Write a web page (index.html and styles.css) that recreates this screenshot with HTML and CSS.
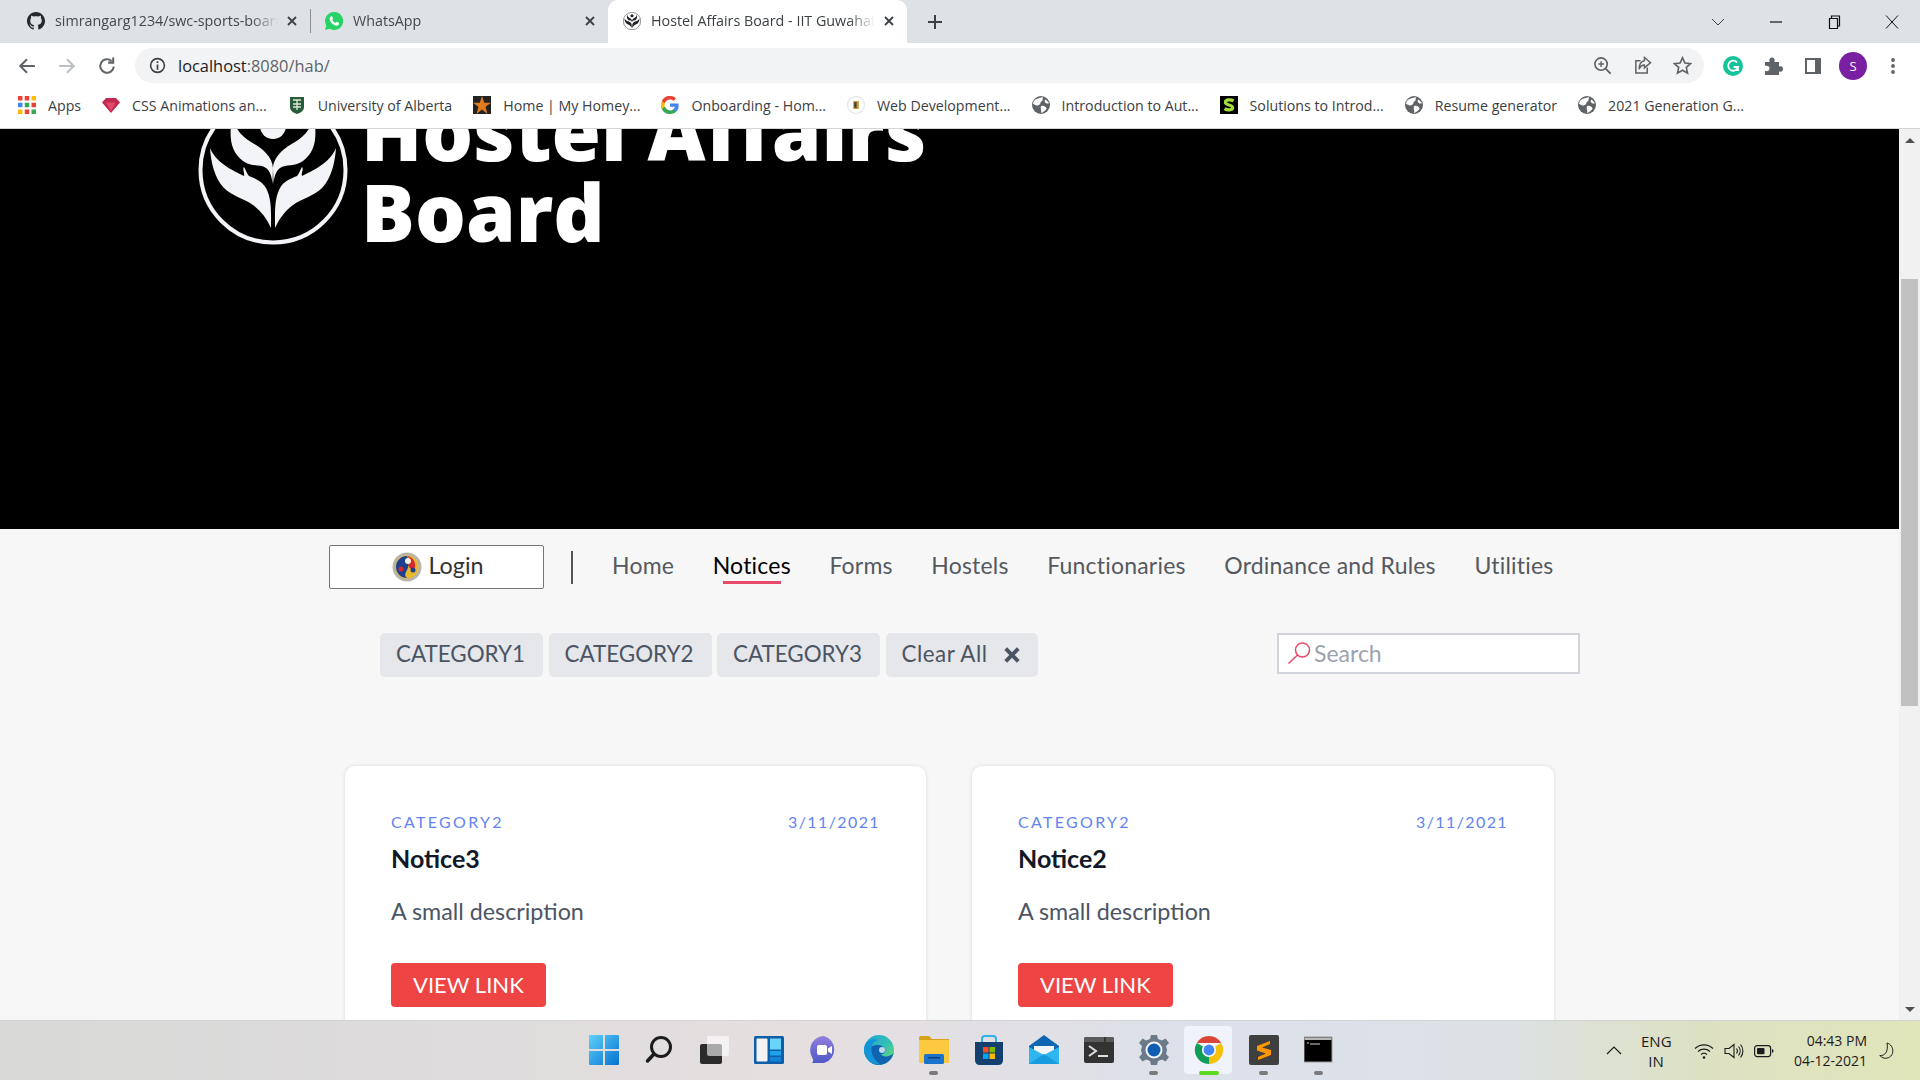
FILE: index.html
```html
<!DOCTYPE html>
<html lang="en">
<head>
    <meta charset="UTF-8">
    <meta name="viewport" content="width=device-width, initial-scale=1.0">
    <title>Hostel Affairs Board - IIT Guwahati</title>
    <link rel="stylesheet" href="styles.css">
</head>
<body>
    <!-- shared icons -->
    <svg class="defs" width="0" height="0">
        <symbol id="habLogo" viewBox="0 0 150 150">
            <circle cx="75" cy="75" r="72.5" fill="none" stroke="currentColor" stroke-width="4"/>
            <circle cx="75" cy="31" r="13" fill="currentColor"/>
            <g id="habLeaves" fill="currentColor">
                <path d="M75 73C76 60 88 52 97 47C105 42 112 36 116 22C119 42 118 56 105 66C97 72 88 69 82 73C78 76 76 82 75.5 89Z"/>
                <path d="M77 133C77 118 76 104 82 93C86 86 92 84 99 81C101 79 102 75 104 72C106 74 103 78 104 81C114 76 132 68 138 53C137 68 133 84 124 93C116 101 105 103 95 110C87 116 81 124 77 133Z"/>
            </g>
            <use href="#habLeaves" transform="matrix(-1 0 0 1 150 0)"/>
        </symbol>
        <symbol id="globe" viewBox="0 0 16 16">
            <circle cx="8" cy="8" r="8" fill="#5f6368"/>
            <path d="M3 3C5 2 8 1 10 1C9 3 10 4 8 5C7 6 8 7 6 8C5 9 3 8 1 7C1 5 2 4 3 3ZM8 9C10 8 12 9 13 11C12 13 10 14 8 15C9 13 7 11 8 9ZM12 3L15 6C15 7 13 7 12 6C11 5 11 4 12 3Z" fill="#fff"/>
        </symbol>
        <symbol id="tabClose" viewBox="0 0 12 12">
            <path d="M2 2L10 10M10 2L2 10" stroke="#3c4043" stroke-width="1.8" fill="none"/>
        </symbol>
    </svg>

    <div class="tabstrip">
        <div class="tab">
            <svg class="favicon" viewBox="0 0 16 16"><path fill="#24292e" d="M8 0C3.6 0 0 3.6 0 8c0 3.5 2.3 6.5 5.5 7.6.4.1.5-.2.5-.4v-1.4c-2.2.5-2.7-1-2.7-1-.4-.9-.9-1.200-.9-1.200-.7-.5.100-.5.100-.5.800.100 1.200.800 1.200.800.700 1.200 1.900.900 2.300.700.100-.500.300-.900.500-1.100-1.800-.200-3.600-.900-3.600-4 0-.900.300-1.600.800-2.100-.100-.200-.400-1 .100-2.100 0 0 .700-.200 2.200.800.600-.200 1.300-.300 2-.300s1.400.100 2 .300c1.500-1 2.200-.800 2.200-.800.400 1.100.200 1.900.100 2.100.500.600.800 1.300.800 2.100 0 3.100-1.900 3.700-3.700 3.900.300.300.600.800.600 1.500v2.200c0 .200.100.500.600.400C13.700 14.500 16 11.500 16 8c0-4.400-3.600-8-8-8z"/></svg>
            <span class="tab-title">simrangarg1234/swc-sports-board</span>
            <svg class="tab-close"><use href="#tabClose"/></svg>
        </div>
        <div class="tab tab-sep">
            <svg class="favicon" viewBox="0 0 16 16"><path fill="#25d366" d="M8 0a8 8 0 0 0-6.900 12L0 16l4.100-1.100A8 8 0 1 0 8 0z"/><path fill="#fff" d="M5.500 3.800c-.5 0-1.400.8-1.400 2.200 0 2.400 3.300 6.200 6.300 6.200 1.200 0 2-1 2-1.800v-.7L10.400 8.600l-1 1c-1 0-2.600-1.600-3-2.800l.8-1-.9-2z"/></svg>
            <span class="tab-title">WhatsApp</span>
            <svg class="tab-close"><use href="#tabClose"/></svg>
        </div>
        <div class="tab tab-active">
            <svg class="favicon fav-hab"><use href="#habLogo"/></svg>
            <span class="tab-title">Hostel Affairs Board - IIT Guwahati</span>
            <svg class="tab-close"><use href="#tabClose"/></svg>
        </div>
        <svg class="new-tab" viewBox="0 0 14 14"><path d="M7 0V14M0 7H14" stroke="#3c4043" stroke-width="2"/></svg>
        <div class="window-btns">
            <svg viewBox="0 0 14 14"><path d="M1 4L7 10L13 4" fill="none" stroke="#444" stroke-width="1"/></svg>
            <svg viewBox="0 0 14 14"><path d="M1 7H13" stroke="#111" stroke-width="1.200"/></svg>
            <svg viewBox="0 0 14 14"><path d="M2.500 3.500H10.500V13.500H2.500ZM4.500 3V1H12.500V11H11" fill="none" stroke="#111" stroke-width="1.200"/></svg>
            <svg viewBox="0 0 14 14"><path d="M1 0.500L13 13.500M13 0.500L1 13.500" stroke="#111" stroke-width="1"/></svg>
        </div>
    </div>

    <div class="toolbar">
        <svg class="nav-arrow" viewBox="0 0 16 16"><path d="M15 8H2M8 2L2 8L8 14" fill="none" stroke="#5f6368" stroke-width="1.800"/></svg>
        <svg class="nav-arrow" viewBox="0 0 16 16"><path d="M1 8H14M8 2L14 8L8 14" fill="none" stroke="#bcc0c4" stroke-width="1.800"/></svg>
        <svg class="nav-arrow" viewBox="0 0 16 16"><path d="M14 8.500A6 6 0 1 1 12 3.500M13.500 0.500V5H9" fill="none" stroke="#5f6368" stroke-width="1.800"/></svg>
        <div class="omnibox">
            <svg class="info-icon" viewBox="0 0 16 16"><circle cx="8" cy="8" r="6.500" fill="none" stroke="#3c4043" stroke-width="1.500"/><path d="M8 7V12M8 4V5.600" stroke="#3c4043" stroke-width="1.600"/></svg>
            <span class="url">localhost<span class="url-rest">:8080/hab/</span></span>
            <div class="omni-icons">
                <svg viewBox="0 0 20 20"><circle cx="8.500" cy="8.500" r="6.500" fill="none" stroke="#5f6368" stroke-width="1.700"/><path d="M13.500 13.500L18.500 18.500" stroke="#5f6368" stroke-width="2"/><path d="M8.500 5.500V11.500M5.500 8.500H11.500" stroke="#5f6368" stroke-width="1.500"/></svg>
                <svg viewBox="0 0 20 20"><path d="M8 5H3V18H15V12" fill="none" stroke="#5f6368" stroke-width="1.600"/><path d="M12 1.500L18.500 7L12 12.500V9.500C9 9.500 7.500 11 6.500 14C6.500 9 8.500 5.500 12 5Z" fill="none" stroke="#5f6368" stroke-width="1.500"/></svg>
                <svg viewBox="0 0 20 20"><path d="M10 1.800L12.500 7.300L18.500 8L14 12L15.300 18L10 15L4.700 18L6 12L1.500 8L7.500 7.300Z" fill="none" stroke="#5f6368" stroke-width="1.700"/></svg>
            </div>
        </div>
        <div class="ext-icons">
            <svg viewBox="0 0 20 20"><circle cx="10" cy="10" r="10" fill="#15c39a"/><path d="M14 6.500A5 5 0 1 0 15 11H10.500M15 11V15" fill="none" stroke="#fff" stroke-width="1.800"/></svg>
            <svg viewBox="0 0 20 20"><path d="M2 6H6.500C6 3 7 1.500 9 1.500S12 3 11.500 6H16V10.500C19 10 20 11 20 13S19 16 16 15.500V19H2V15C5 15.500 6.500 14.500 6.500 12.500S5 9.500 2 10Z" fill="#5f6368"/></svg>
            <svg viewBox="0 0 20 20"><path d="M2 2H18V18H2ZM4 4V16H12V4Z" fill="#5f6368" fill-rule="evenodd"/></svg>
            <div class="avatar">S</div>
            <svg viewBox="0 0 20 20"><circle cx="10" cy="4" r="1.900" fill="#5f6368"/><circle cx="10" cy="10" r="1.900" fill="#5f6368"/><circle cx="10" cy="16" r="1.900" fill="#5f6368"/></svg>
        </div>
    </div>

    <div class="bookmarks">
        <div class="bm bm-apps">
            <svg viewBox="0 0 16 16"><g fill="#ea4335"><rect width="4" height="4"/><rect x="6" width="4" height="4"/></g><rect x="12" width="4" height="4" fill="#fbbc05"/><rect y="6" width="4" height="4" fill="#4285f4"/><rect x="6" y="6" width="4" height="4" fill="#34a853"/><rect x="12" y="6" width="4" height="4" fill="#ea4335"/><rect y="12" width="4" height="4" fill="#fbbc05"/><rect x="6" y="12" width="4" height="4" fill="#ea4335"/><rect x="12" y="12" width="4" height="4" fill="#34a853"/></svg>
            <span>Apps</span>
        </div>
        <div class="bm bm-css">
            <svg viewBox="0 0 18 16"><path d="M4 1H14L18 5.500L9 16L0 5.500Z" fill="#c2294f"/><path d="M4 5.500H14L9 14Z" fill="#e0486f"/></svg>
            <span>CSS Animations an...</span>
        </div>
        <div class="bm bm-ua">
            <svg viewBox="0 0 16 18"><path d="M1 1H15V11C15 15 11 17 8 18C5 17 1 15 1 11Z" fill="#275d38"/><path d="M4 4H12M4 8H12M8 4V14M4 11H12" stroke="#dfe8d8" stroke-width="1.300"/></svg>
            <span>University of Alberta</span>
        </div>
        <div class="bm bm-home">
            <svg viewBox="0 0 20 20"><rect width="20" height="20" fill="#222"/><path d="M10 0L12.500 7.500H20L14 12L16 20L10 15L4 20L6 12L0 7.500H7.500Z" fill="#e07b1f"/></svg>
            <span>Home | My Homey...</span>
        </div>
        <div class="bm bm-onb">
            <svg viewBox="0 0 16 16"><path d="M15.700 8.200c0-.6-.1-1.100-.2-1.600H8v3h4.400c-.2 1-.8 1.800-1.600 2.400v2h2.600c1.500-1.400 2.300-3.400 2.300-5.800z" fill="#4285f4"/><path d="M8 16c2.200 0 4-.7 5.400-2l-2.600-2c-.7.500-1.700.8-2.800.8-2.100 0-3.900-1.400-4.600-3.400H.7v2.100A8 8 0 0 0 8 16z" fill="#34a853"/><path d="M3.400 9.500a4.800 4.800 0 0 1 0-3V4.400H.7a8 8 0 0 0 0 7.200z" fill="#fbbc05"/><path d="M8 3.200c1.200 0 2.300.4 3.100 1.200l2.300-2.300A8 8 0 0 0 .7 4.400l2.700 2.100C4.100 4.600 5.900 3.200 8 3.200z" fill="#ea4335"/></svg>
            <span>Onboarding - Hom...</span>
        </div>
        <div class="bm bm-web">
            <svg viewBox="0 0 16 16"><circle cx="8" cy="8" r="7.500" fill="#fff" stroke="#e3e3e3"/><rect x="5.500" y="4.500" width="5" height="7" fill="#c99a2e"/><rect x="6.500" y="5.500" width="2" height="5" fill="#3c3c3c"/></svg>
            <span>Web Development...</span>
        </div>
        <div class="bm bm-intro"><svg><use href="#globe"/></svg><span>Introduction to Aut...</span></div>
        <div class="bm bm-sol">
            <svg viewBox="0 0 20 20"><rect width="20" height="20" fill="#000"/><path d="M15 5.500C13 4 6 3.500 6 7C6 11 14 9 14 13C14 16 8 16 5 14" fill="none" stroke="#a4dc3a" stroke-width="3.500"/></svg>
            <span>Solutions to Introd...</span>
        </div>
        <div class="bm bm-res"><svg><use href="#globe"/></svg><span>Resume generator</span></div>
        <div class="bm"><svg><use href="#globe"/></svg><span>2021 Generation G...</span></div>
    </div>

    <div class="viewport">
        <div class="page">
            <header class="hero">
                <svg class="hero-logo"><use href="#habLogo"/></svg>
                <h1>Hostel Affairs<br>Board</h1>
            </header>

            <nav class="site-nav">
                <button class="login-btn">
                    <svg viewBox="0 0 30 30"><circle cx="15" cy="15" r="14.500" fill="#b9b6a8"/><circle cx="15" cy="15" r="11.500" fill="#e6b92e"/><path d="M15 4A11 11 0 0 0 15 26C9 21 21 17 15 4Z" fill="#1d3f8f"/><path d="M15 4C21 8 11 15 22 18C25 12 22 5 15 4Z" fill="#d6282d"/><circle cx="16" cy="9" r="3" fill="#f6f1e4"/><circle cx="9" cy="17" r="2.500" fill="#d6282d"/><circle cx="21" cy="18" r="2.500" fill="#1d3f8f"/></svg>
                    <span>Login</span>
                </button>
                <div class="nav-divider"></div>
                <a class="nav-link">Home</a>
                <a class="nav-link active">Notices</a>
                <a class="nav-link">Forms</a>
                <a class="nav-link">Hostels</a>
                <a class="nav-link">Functionaries</a>
                <a class="nav-link">Ordinance and Rules</a>
                <a class="nav-link">Utilities</a>
            </nav>

            <div class="filters">
                <div class="chips">
                    <div class="chip">CATEGORY1</div>
                    <div class="chip">CATEGORY2</div>
                    <div class="chip">CATEGORY3</div>
                    <div class="chip chip-clear">Clear All
                        <svg viewBox="0 0 14 14"><path d="M1.500 1.500L12.500 12.500M12.500 1.500L1.500 12.500" stroke="#4b5563" stroke-width="3.400"/></svg>
                    </div>
                </div>
                <div class="search-box">
                    <svg viewBox="0 0 24 22"><circle cx="15.500" cy="8" r="7" fill="none" stroke="#e9496b" stroke-width="1.500"/><path d="M10.500 13L1.500 21.500" stroke="#e9496b" stroke-width="1.500"/></svg>
                    <span>Search</span>
                </div>
            </div>

            <div class="notices">
                <div class="card">
                    <div class="card-top"><span>CATEGORY2</span><span class="card-date">3/11/2021</span></div>
                    <h3>Notice3</h3>
                    <p>A small description</p>
                    <a class="view-link">VIEW LINK</a>
                </div>
                <div class="card">
                    <div class="card-top"><span>CATEGORY2</span><span class="card-date">3/11/2021</span></div>
                    <h3>Notice2</h3>
                    <p>A small description</p>
                    <a class="view-link">VIEW LINK</a>
                </div>
            </div>
        </div>

        <div class="scrollbar">
            <div class="arrow-up"></div>
            <div class="thumb"></div>
            <div class="arrow-down"></div>
        </div>
    </div>

    <div class="taskbar">
        <div class="task-icons">
            <div class="task">
                <svg viewBox="0 0 30 30"><defs><linearGradient id="winBlue" x1="0" y1="0" x2="1" y2="1"><stop offset="0" stop-color="#5fd0fb"/><stop offset="1" stop-color="#0572cf"/></linearGradient></defs><path d="M0 1Q0 0 1 0H14V14H0ZM16 0H29Q30 0 30 1V14H16ZM0 16H14V30H1Q0 30 0 29ZM16 16H30V29Q30 30 29 30H16Z" fill="url(#winBlue)"/></svg>
            </div>
            <div class="task">
                <svg viewBox="0 0 30 30"><circle cx="17" cy="12" r="9.500" fill="none" stroke="#1c1c1c" stroke-width="3"/><path d="M10 19L3.500 26" stroke="#1c1c1c" stroke-width="3.500" stroke-linecap="round"/></svg>
            </div>
            <div class="task">
                <svg viewBox="0 0 30 30"><rect x="1" y="9" width="22" height="20" rx="2" fill="#2b2b2b"/><rect x="8" y="1" width="22" height="20" rx="2" fill="#fff" fill-opacity=".6"/></svg>
            </div>
            <div class="task">
                <svg viewBox="0 0 30 30"><rect width="30" height="28" y="1" rx="1.500" fill="#0f5fa8"/><rect x="2.500" y="3.500" width="11" height="23" rx="1" fill="#f3f3f3"/><rect x="16" y="3.500" width="11" height="11" fill="#6ad4fb"/><rect x="16" y="16" width="11" height="4.500" fill="#1ea2ec"/><rect x="16" y="22" width="11" height="4.500" fill="#1384d8"/></svg>
            </div>
            <div class="task">
                <svg viewBox="0 0 30 30"><defs><linearGradient id="chatGrad" x1="0" y1="0" x2="0" y2="1"><stop offset="0" stop-color="#8f7fdc"/><stop offset="1" stop-color="#5059c9"/></linearGradient></defs><path d="M15 1A14 14 0 0 1 15 28H3C5 26 4 24 3 22A14 14 0 0 1 15 1Z" fill="url(#chatGrad)"/><rect x="8" y="10" width="10" height="10" rx="2" fill="#fff"/><path d="M19 13.500L23 11V19L19 16.500Z" fill="#fff"/></svg>
            </div>
            <div class="task">
                <svg viewBox="0 0 30 30"><defs><linearGradient id="edgeGrad" x1="0" y1="0" x2="1" y2="1"><stop offset="0" stop-color="#1fa3d8"/><stop offset=".55" stop-color="#35c1b1"/><stop offset="1" stop-color="#7fe05f"/></linearGradient></defs><circle cx="15" cy="15" r="15" fill="url(#edgeGrad)"/><path d="M30 17C28 22 18 23 17 19C20 19 22 17 21 14C19 9 8 8 4 15C0 22 6 30 15 30C22 30 28 25 30 17Z" fill="#0f63b0"/><path d="M1 10C3 5 9 3 14 5C10 6 6 10 8 18C9 23 13 27 17 29.700C8 31 0 24 0 15C0 13 0 12 1 10Z" fill="#1493d6"/><circle cx="18" cy="15" r="3" fill="#f0f4f6" fill-opacity=".8"/></svg>
            </div>
            <div class="task running">
                <svg viewBox="0 0 30 30"><path d="M0 3Q0 1 2 1H10L13 4H30V10H0Z" fill="#d9a21b"/><rect y="5" width="30" height="23" fill="#fcc93f"/><rect x="5" y="19" width="20" height="10" rx="1.500" fill="#1a74cc"/><rect x="9" y="22" width="12" height="1.500" fill="#0c3f7a"/></svg>
            </div>
            <div class="task">
                <svg viewBox="0 0 30 30"><path d="M8 7V4Q8 1 11 1H19Q22 1 22 4V7" fill="none" stroke="#2bb4ec" stroke-width="2"/><path d="M1 7H29V25Q29 30 24 30H6Q1 30 1 25Z" fill="#14406f"/><rect x="9" y="12" width="5.500" height="5.500" fill="#f25022"/><rect x="15.500" y="12" width="5.500" height="5.500" fill="#7fba00"/><rect x="9" y="18.500" width="5.500" height="5.500" fill="#00a4ef"/><rect x="15.500" y="18.500" width="5.500" height="5.500" fill="#ffb900"/></svg>
            </div>
            <div class="task">
                <svg viewBox="0 0 30 30"><path d="M15 0L30 11V29H0V11Z" fill="#0f67b1"/><path d="M5 11H25V19L15 24L5 19Z" fill="#f4f7fa"/><path d="M0 12L15 20L30 12V29H0Z" fill="#2fb6f0"/><path d="M0 29L15 19L30 29Z" fill="#1a9be0"/></svg>
            </div>
            <div class="task">
                <svg viewBox="0 0 30 30"><rect y="2" width="30" height="26" rx="2" fill="#333"/><path d="M0 4Q0 2 2 2H20V7H0ZM22 2H28Q30 2 30 4V7H22Z" fill="#5b5b5b"/><path d="M5 11L12 16L5 21" fill="none" stroke="#e0e0e0" stroke-width="2"/><rect x="14" y="20" width="10" height="2" fill="#e0e0e0"/></svg>
            </div>
            <div class="task running">
                <svg viewBox="0 0 30 30"><path d="M12 0H18L19 4L23 5.500L26.500 3.500L30 8L27 11L28 15L27 19L30 22L26.500 26.500L23 24.500L19 26L18 30H12L11 26L7 24.500L3.500 26.500L0 22L3 19L2 15L3 11L0 8L3.500 3.500L7 5.500L11 4Z" fill="#6b7a88"/><circle cx="15" cy="15" r="8.500" fill="#f2f5f7"/><circle cx="15" cy="15" r="6.500" fill="#0f5cb0"/></svg>
            </div>
            <div class="task task-active">
                <svg viewBox="0 0 32 32"><path d="M3 8.500A15 15 0 0 1 29 8.500H16Z" fill="#db4437"/><path d="M29 8.500A15 15 0 0 1 16 31L16 16Z" fill="#f4c20d"/><path d="M16 31A15 15 0 0 1 3 8.500L16 16Z" fill="#0f9d58"/><circle cx="16" cy="16" r="7.500" fill="#fff"/><circle cx="16" cy="16" r="5.800" fill="#4285f4"/></svg>
            </div>
            <div class="task running">
                <svg viewBox="0 0 30 30"><rect width="30" height="30" rx="2" fill="#3f3f3f"/><path d="M21 6L8 11V15.500L17 18.500L9 22V25L22 20V15L13 12.500L21 9Z" fill="#ff9800"/></svg>
            </div>
            <div class="task running">
                <svg viewBox="0 0 30 30"><rect x="0" y="2" width="28" height="25" fill="#000" stroke="#9a9a9a" stroke-width="1"/><rect x="0.500" y="2.500" width="27" height="2.500" fill="#b8b8b8"/><path d="M3 8H5M6 9H16" stroke="#d0d0d0" stroke-width="1"/></svg>
            </div>
        </div>

        <div class="tray">
            <svg class="tray-chevron" viewBox="0 0 16 9"><path d="M1 8L8 1L15 8" fill="none" stroke="#1c1c1c" stroke-width="1.200"/></svg>
            <div class="tray-lang">ENG<br>IN</div>
            <svg class="tray-icon" viewBox="0 0 20 18"><path d="M1 6.500A13 13 0 0 1 19 6.500M4 9.500A9 9 0 0 1 16 9.500M7 12.500A4.500 4.500 0 0 1 13 12.500" fill="none" stroke="#1c1c1c" stroke-width="1.200"/><circle cx="10" cy="15.500" r="1.300" fill="#1c1c1c"/></svg>
            <svg class="tray-icon" viewBox="0 0 20 18"><path d="M1 6.500H5L10 2.500V15.500L5 11.500H1Z" fill="none" stroke="#1c1c1c" stroke-width="1.100"/><path d="M12.500 6.500A4 4 0 0 1 12.500 11.500M14.500 4.500A7 7 0 0 1 14.500 13.500M16.500 2.500A10 10 0 0 1 16.500 15.500" fill="none" stroke="#1c1c1c" stroke-width="1.100"/></svg>
            <svg class="tray-icon" viewBox="0 0 20 18"><rect x="0.600" y="3.600" width="16" height="11" rx="2.500" fill="none" stroke="#1c1c1c" stroke-width="1.200"/><rect x="3" y="6" width="7.500" height="6.200" rx="1" fill="#1c1c1c"/><path d="M18 7V11Q19.500 10.500 19.500 9T18 7Z" fill="#1c1c1c"/></svg>
            <div class="tray-clock">04:43 PM<br>04-12-2021</div>
            <svg class="tray-moon" viewBox="0 0 18 20"><path d="M9 1C13 2 16 6 15.500 11C15 16 10 19 5.500 18C3.500 17.500 2 16.500 1 15C6 16 11 11 9 1Z" fill="none" stroke="#1c1c1c" stroke-width="1.100"/></svg>
        </div>
    </div>
</body>
</html>
```

FILE: styles.css
```css
* {
    box-sizing: border-box;
}
html, body {
    margin: 0;
    padding: 0;
    height: 100%;
}
body {
    width: 1920px;
    height: 1080px;
    display: flex;
    flex-direction: column;
    overflow: hidden;
    font-family: "Open Sans", "Noto Sans", sans-serif;
    background-color: #fff;
}
.defs {
    position: absolute;
}

/* browser tabs */
.tabstrip {
    flex: none;
    height: 43px;
    display: flex;
    align-items: center;
    padding-left: 12px;
    background-color: #dee1e6;
}
.tab {
    width: 298px;
    height: 43px;
    display: flex;
    align-items: center;
    padding: 0 12px 2px 15px;
    font-size: 14.3px;
    color: #45484c;
    position: relative;
}
.tab-sep::before {
    content: "";
    position: absolute;
    left: 0;
    top: 9px;
    height: 24px;
    width: 1px;
    background-color: #8f9296;
}
.tab-active {
    background-color: #fff;
    border-radius: 10px 10px 0 0;
    color: #3c4043;
    width: 299px;
}
.favicon {
    width: 18px;
    height: 18px;
    flex: none;
}
.fav-hab {
    color: #202124;
}
.tab-title {
    flex: 1;
    margin-left: 10px;
    white-space: nowrap;
    overflow: hidden;
    margin-right: 8px;
    -webkit-mask-image: linear-gradient(90deg, #000 88%, transparent);
    mask-image: linear-gradient(90deg, #000 88%, transparent);
}
.tab-close {
    width: 12px;
    height: 12px;
    flex: none;
}
.new-tab {
    width: 14px;
    height: 14px;
    margin-left: 21px;
}
.window-btns {
    margin-left: auto;
    display: flex;
    align-items: center;
    height: 38px;
    padding-right: 21px;
    gap: 44px;
}
.window-btns svg {
    width: 14px;
    height: 14px;
}

/* address bar */
.toolbar {
    flex: none;
    height: 45px;
    display: flex;
    align-items: center;
    padding-left: 18px;
    background-color: #fff;
}
.nav-arrow {
    width: 18px;
    height: 18px;
    margin-right: 22px;
}
.omnibox {
    width: 1569px;
    height: 35px;
    margin-left: -3px;
    display: flex;
    align-items: center;
    padding-left: 14px;
    border-radius: 18px;
    background-color: #f1f3f4;
}
.info-icon {
    width: 17px;
    height: 17px;
}
.url {
    margin-left: 12px;
    font-size: 16.4px;
    color: #202124;
}
.url-rest {
    color: #5f6368;
}
.omni-icons {
    margin-left: auto;
    display: flex;
    gap: 21px;
    padding-right: 12px;
}
.omni-icons svg {
    width: 19px;
    height: 19px;
}
.ext-icons {
    margin-left: 19px;
    display: flex;
    align-items: center;
    gap: 20px;
}
.ext-icons svg {
    width: 20px;
    height: 20px;
}
.avatar {
    width: 28px;
    height: 28px;
    margin: 0 -4px;
    border-radius: 50%;
    background-color: #7b1fa2;
    color: #fff;
    font-size: 13px;
    line-height: 28px;
    text-align: center;
}

/* bookmarks */
.bookmarks {
    flex: none;
    height: 41px;
    display: flex;
    align-items: center;
    padding: 0 0 6px 18px;
    font-size: 14.2px;
    color: #3c4043;
    background-color: #fff;
    border-bottom: 1px solid #d4d4d4;
    white-space: nowrap;
}
.bm {
    display: flex;
    align-items: center;
    gap: 12px;
    margin-right: 21px;
}
.bm svg {
    width: 18px;
    height: 18px;
    flex: none;
}

/* page */
.viewport {
    flex: 1;
    min-height: 0;
    display: flex;
}
.page {
    flex: 1;
    min-width: 0;
    overflow: hidden;
    background-color: #f7f7f7;
    font-family: Lato, sans-serif;
}
.hero {
    height: 400px;
    display: flex;
    align-items: flex-end;
    padding: 0 0 278px 198px;
    background-color: #000;
    color: #f3f4f8;
    overflow: hidden;
}
.hero-logo {
    width: 150px;
    height: 150px;
    flex: none;
    margin-bottom: 6px;
}
.hero h1 {
    margin: 0 0 0 13px;
    font-family: "Open Sans", sans-serif;
    font-size: 80px;
    line-height: 81px;
    font-weight: 800;
    color: #fff;
    white-space: nowrap;
}
.site-nav {
    display: flex;
    align-items: center;
    padding: 16px 0 0 329px;
    height: 60px;
}
.login-btn {
    width: 215px;
    height: 44px;
    display: flex;
    align-items: center;
    justify-content: center;
    gap: 7px;
    padding: 0 0 4px 2px;
    border: 1px solid #777;
    border-radius: 2px;
    background-color: #fff;
    font-family: inherit;
    font-size: 23.3px;
    color: #333;
}
.login-btn svg {
    width: 30px;
    height: 30px;
    margin-top: 4px;
}
.nav-divider {
    width: 2px;
    height: 33px;
    margin: 0 39px 0 27px;
    background-color: #555;
}
.nav-link {
    position: relative;
    margin-right: 38.6px;
    padding-bottom: 4px;
    font-size: 23px;
    letter-spacing: 0.2px;
    color: #55595f;
}
.nav-link.active {
    color: #000;
}
.nav-link.active::after {
    content: "";
    position: absolute;
    left: 10px;
    right: 10px;
    bottom: -1px;
    height: 3px;
    background-color: #e9496b;
}
.filters {
    display: flex;
    justify-content: space-between;
    align-items: flex-start;
    margin: 44px 319px 0 380px;
}
.chips {
    display: flex;
    gap: 5.5px;
}
.chip {
    height: 44px;
    display: flex;
    align-items: center;
    padding: 0 18px 4px 16px;
    border-radius: 5px;
    background-color: #e5e7eb;
    font-size: 22.4px;
    color: #4b5563;
}
.chip-clear {
    letter-spacing: 0.5px;
}
.chip-clear svg {
    width: 16px;
    height: 16px;
    margin: 4px 0 0 16px;
}
.search-box {
    width: 303px;
    height: 41px;
    display: flex;
    align-items: center;
    gap: 3px;
    padding: 0 0 2px 8px;
    border: 2px solid #d1d5db;
    background-color: #fff;
    font-size: 23px;
    color: #9ca3af;
}
.search-box svg {
    width: 24px;
    height: 22px;
}
.notices {
    display: grid;
    grid-template-columns: 581px 582px;
    gap: 46px;
    margin: 89px 0 0 345px;
}
.card {
    padding: 46px 46px 30px;
    border-radius: 10px;
    background-color: #fff;
    box-shadow: 0 0 4px rgba(0, 0, 0, 0.12);
}
.card-top {
    display: flex;
    justify-content: space-between;
    font-size: 16px;
    line-height: 20px;
    letter-spacing: 2.3px;
    color: #6384f0;
}
.card-date {
    letter-spacing: 1.4px;
}
.card h3 {
    margin: 10px 0 0;
    font-size: 25px;
    line-height: 32px;
    font-weight: 700;
    color: #111827;
}
.card p {
    margin: 22px 0 0;
    font-size: 23.3px;
    line-height: 30px;
    color: #4b5563;
}
.view-link {
    display: inline-block;
    margin-top: 37px;
    padding: 0 22px;
    height: 44px;
    line-height: 44px;
    border-radius: 4px;
    background-color: #ef4444;
    font-size: 22px;
    color: #fff;
}

/* scrollbar */
.scrollbar {
    width: 21px;
    flex: none;
    display: flex;
    flex-direction: column;
    align-items: center;
    background-color: #f1f1f1;
}
.arrow-up {
    margin-top: 9px;
    border: 5px solid transparent;
    border-top: 0;
    border-bottom: 5px solid #505050;
}
.thumb {
    width: 17px;
    height: 427px;
    margin-top: 136px;
    background-color: #c1c1c1;
}
.arrow-down {
    margin-top: auto;
    margin-bottom: 8px;
    border: 5px solid transparent;
    border-bottom: 0;
    border-top: 5px solid #505050;
}

/* windows taskbar */
.taskbar {
    flex: none;
    height: 60px;
    display: flex;
    align-items: center;
    padding-left: 576px;
    border-top: 1px solid #d3d3d3;
    background: linear-gradient(90deg, #d9d9d8 0, #dedcdc 25%, #e6dfe0 42%, #dce1eb 65%, #dde1e6 78%, #dde1c4 88%, #e1e5b9 100%);
}
.task-icons {
    display: flex;
    align-items: center;
}
.task {
    position: relative;
    width: 55px;
    height: 59px;
    display: flex;
    align-items: center;
    justify-content: center;
    padding-bottom: 2px;
}
.task svg {
    width: 30px;
    height: 30px;
}
.task.running::after {
    content: "";
    position: absolute;
    left: 23px;
    bottom: 5px;
    width: 9px;
    height: 4px;
    border-radius: 2px;
    background-color: #7a7a7a;
}
.task-active::before {
    content: "";
    position: absolute;
    left: 3px;
    top: 5px;
    width: 48px;
    height: 48px;
    border-radius: 4px;
    background-color: #f0f3f9;
}
.task-active svg {
    position: relative;
}
.task-active::after {
    content: "";
    position: absolute;
    left: 18px;
    bottom: 5px;
    width: 20px;
    height: 4px;
    border-radius: 2px;
    background-color: #5fd91f;
}
.tray {
    margin-left: auto;
    display: flex;
    align-items: center;
    font-size: 14px;
    line-height: 20px;
    color: #1c1c1c;
}
.tray-chevron {
    width: 16px;
    height: 9px;
    margin-right: 19px;
}
.tray-lang {
    text-align: center;
    width: 30px;
    margin-right: 23px;
    font-size: 15px;
}
.tray-icon {
    width: 20px;
    height: 18px;
    margin-right: 10px;
}
.tray-clock {
    margin-left: 0;
    text-align: right;
    width: 83px;
}
.tray-moon {
    width: 16px;
    height: 18px;
    margin: 0 25px 0 12px;
}
```
